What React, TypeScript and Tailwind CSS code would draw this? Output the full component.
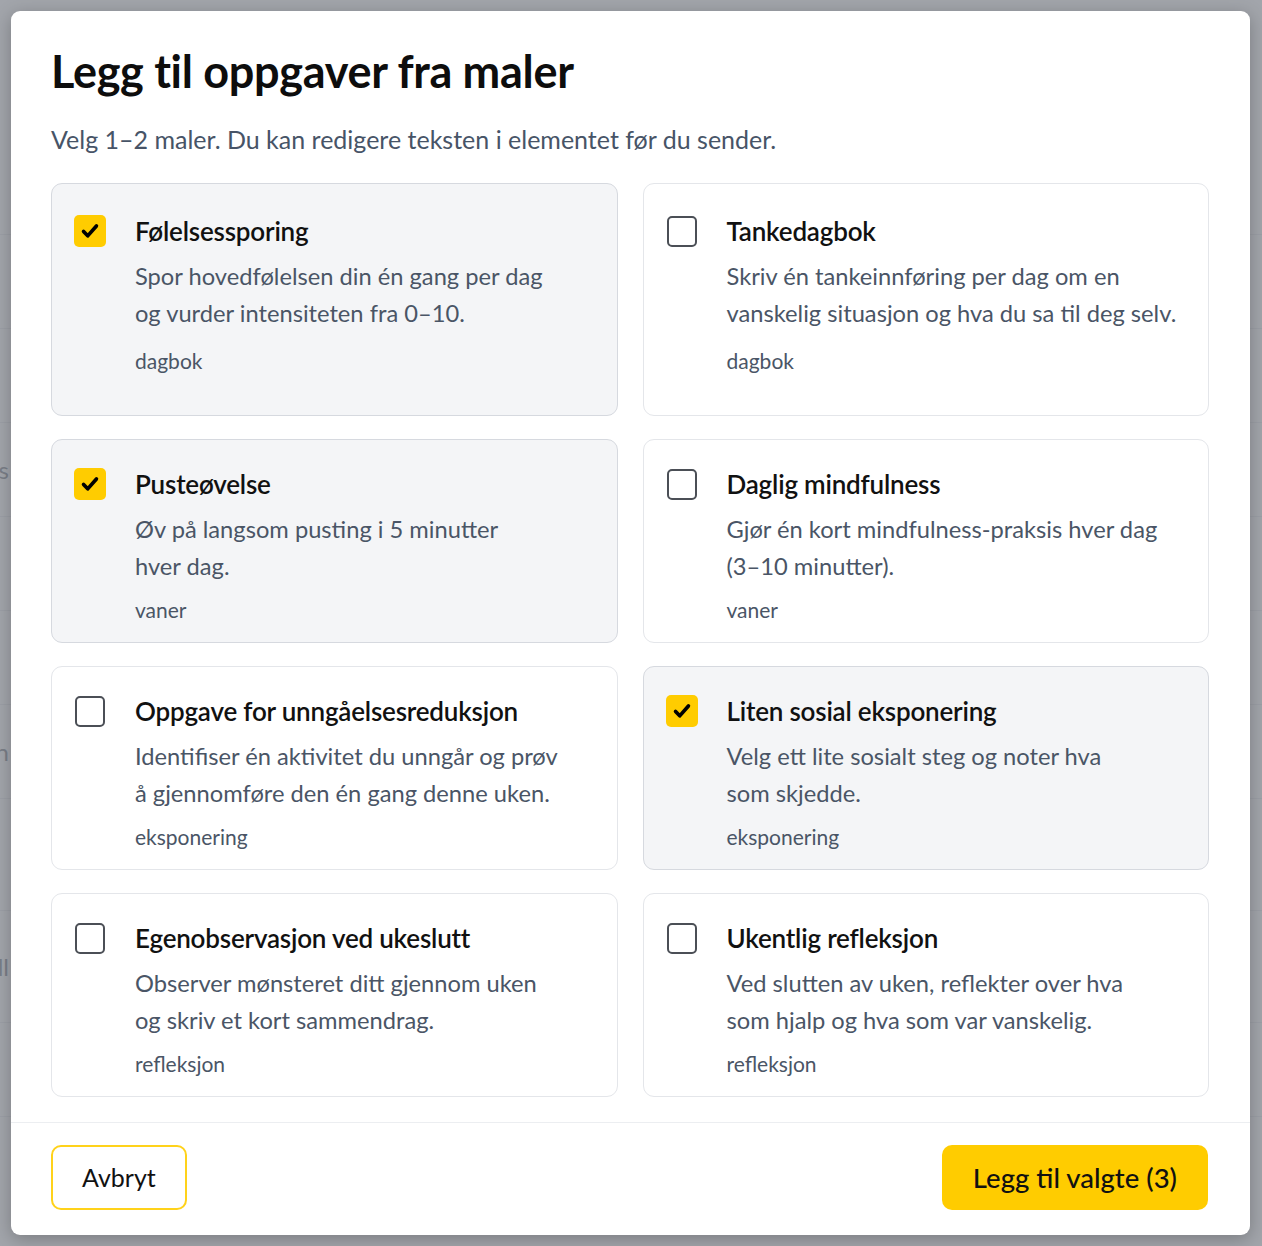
import type { ReactElement } from 'react';

type Template = {
  title: string;
  lines: string[];
  tag: string;
  checked: boolean;
};

const TEMPLATES: Template[] = [
  {
    title: 'Følelsessporing',
    lines: ['Spor hovedfølelsen din én gang per dag', 'og vurder intensiteten fra 0–10.'],
    tag: 'dagbok',
    checked: true,
  },
  {
    title: 'Tankedagbok',
    lines: ['Skriv én tankeinnføring per dag om en', 'vanskelig situasjon og hva du sa til deg selv.'],
    tag: 'dagbok',
    checked: false,
  },
  {
    title: 'Pusteøvelse',
    lines: ['Øv på langsom pusting i 5 minutter', 'hver dag.'],
    tag: 'vaner',
    checked: true,
  },
  {
    title: 'Daglig mindfulness',
    lines: ['Gjør én kort mindfulness-praksis hver dag', '(3–10 minutter).'],
    tag: 'vaner',
    checked: false,
  },
  {
    title: 'Oppgave for unngåelsesreduksjon',
    lines: ['Identifiser én aktivitet du unngår og prøv', 'å gjennomføre den én gang denne uken.'],
    tag: 'eksponering',
    checked: false,
  },
  {
    title: 'Liten sosial eksponering',
    lines: ['Velg ett lite sosialt steg og noter hva', 'som skjedde.'],
    tag: 'eksponering',
    checked: true,
  },
  {
    title: 'Egenobservasjon ved ukeslutt',
    lines: ['Observer mønsteret ditt gjennom uken', 'og skriv et kort sammendrag.'],
    tag: 'refleksjon',
    checked: false,
  },
  {
    title: 'Ukentlig refleksjon',
    lines: ['Ved slutten av uken, reflekter over hva', 'som hjalp og hva som var vanskelig.'],
    tag: 'refleksjon',
    checked: false,
  },
];

// rows of the page that sits behind the dialog (only their right edge peeks out)
const BG_ROWS: { label: string; h: string }[] = [
  { label: '', h: 'h-[94px]' },
  { label: '', h: 'h-[94px]' },
  { label: '', h: 'h-[94px]' },
  { label: 'Oppgaves', h: 'h-[94px]' },
  { label: '', h: 'h-[94px]' },
  { label: '', h: 'h-[94px]' },
  { label: 'Dokumentasjon', h: 'h-[94px]' },
  { label: '', h: 'h-[112px]' },
  { label: 'Protokoll', h: 'h-[112px]' },
  { label: '', h: 'h-[94px]' },
];

function Checkbox({ checked }: { checked: boolean }): ReactElement {
  if (checked) {
    return (
      <span className="flex h-[32px] w-[32px] shrink-0 items-center justify-center rounded-[5px] bg-[#ffcc00]">
        <svg width="22" height="22" viewBox="0 0 24 24" fill="none">
          <path d="M5 12.5l4.5 4.8L19 6.5" stroke="#000" strokeWidth="4" strokeLinecap="round" strokeLinejoin="round" />
        </svg>
      </span>
    );
  }
  return (
    <span className="flex h-[32px] w-[32px] shrink-0 items-center justify-center">
      <span className="h-[31px] w-[30px] rounded-[5px] border-2 border-[#4b4f56] bg-white" />
    </span>
  );
}

function TemplateCard({ t, first }: { t: Template; first: boolean }): ReactElement {
  return (
    <div
      className={`flex gap-[29px] rounded-[11px] border px-[22px] ${first ? 'pt-[31px] pb-[40px]' : 'pt-[28px] pb-[18px]'} ${
        t.checked ? 'border-[#d6d9df] bg-[#f4f5f7]' : 'border-[#e4e6ea] bg-white'
      }`}
    >
      <Checkbox checked={t.checked} />
      <div className="flex min-w-0 flex-col">
        <div className="text-[26px] font-semibold leading-[32px] tracking-[-0.2px] text-[#111111]">{t.title}</div>
        <div className="mt-[11px] whitespace-nowrap text-[23.7px] leading-[37px] text-[#4a5566]">
          {t.lines.map((l) => (
            <div key={l}>{l}</div>
          ))}
        </div>
        <div className={`${first ? 'mt-[15px]' : 'mt-[11px]'} text-[21px] leading-[28px] text-[#4a5566]`}>{t.tag}</div>
      </div>
    </div>
  );
}

export default function App(): ReactElement {
  return (
    <div className="relative min-h-[1246px] w-full overflow-hidden bg-[#f3f4f6] font-['Lato','Noto_Sans',sans-serif]">
      {/* page behind the dialog */}
      <div className="flex flex-col pt-[141px]">
        {BG_ROWS.map((r, i) => (
          <div
            key={i}
            className={`flex ${r.h} items-center justify-end border-b border-[#d5d7dc] pr-[1253px] text-[24px] text-[#2d3340]`}
          >
            <span className="whitespace-nowrap">{r.label}</span>
          </div>
        ))}
      </div>

      {/* overlay + dialog */}
      <div className="absolute inset-0 bg-[#8d9199]/80 p-[11px]">
        <div className="flex h-[1224px] w-[1239px] flex-col rounded-[9px] bg-white shadow-[0_4px_18px_rgba(0,0,0,0.25)]">
          <div className="flex flex-col pl-[40px] pr-[41px] pt-[35px]">
            <h1 className="m-0 text-[45px] font-bold leading-[50px] tracking-[-0.3px] text-[#0d0d0d]">
              Legg til oppgaver fra maler
            </h1>
            <p className="m-0 mt-[27px] text-[25px] leading-[32px] text-[#475467]">
              Velg 1–2 maler. Du kan redigere teksten i elementet før du sender.
            </p>
            <div className="mt-[28px] grid grid-cols-2 gap-x-[25px] gap-y-[23px]">
              {TEMPLATES.map((t, i) => (
                <TemplateCard key={t.title} t={t} first={i < 2} />
              ))}
            </div>
          </div>
          <div className="mt-auto flex items-center justify-between border-t border-[#eceef1] pl-[40px] pr-[42px] pt-[22px] pb-[25px]">
            <button
              type="button"
              className="h-[65px] rounded-[10px] border-2 border-[#ffd21a] bg-white px-[29px] text-[25px] text-[#111111]"
            >
              Avbryt
            </button>
            <button
              type="button"
              className="h-[65px] rounded-[10px] bg-[#ffcc00] px-[31px] text-[27.5px] font-medium text-[#111111]"
            >
              Legg til valgte (3)
            </button>
          </div>
        </div>
      </div>
    </div>
  );
}
